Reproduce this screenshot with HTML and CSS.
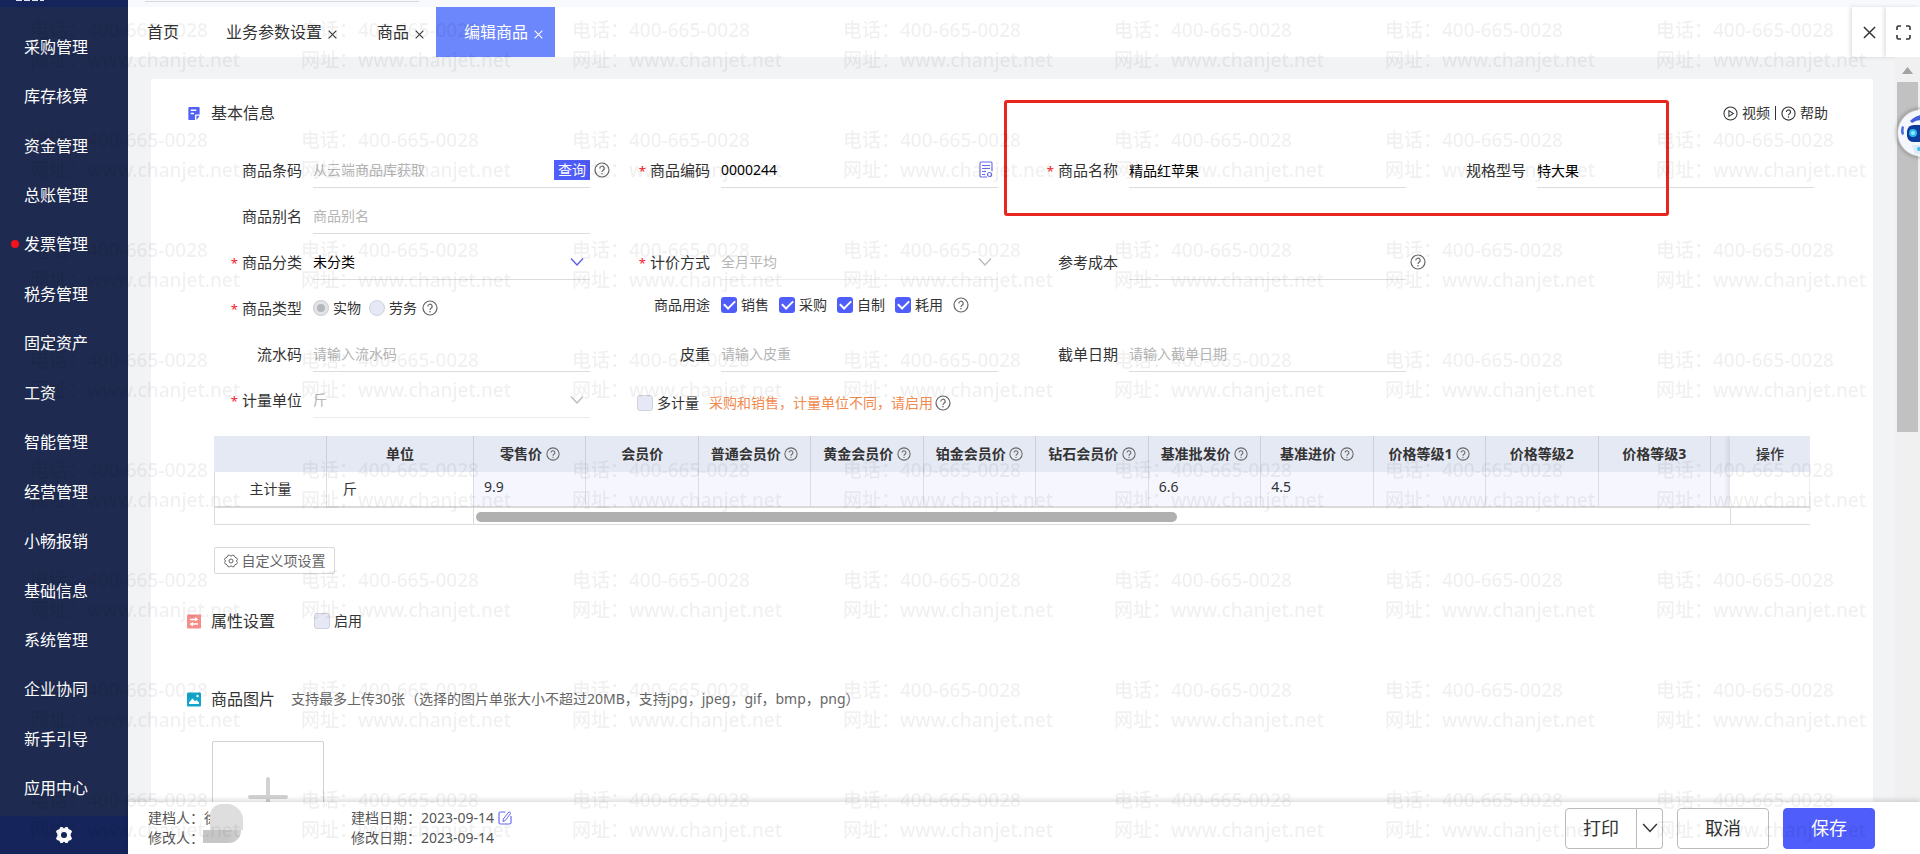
FILE: index.html
```html
<!DOCTYPE html>
<html lang="zh-CN">
<head>
    <meta charset="UTF-8">
    <title>编辑商品</title>
    <link rel="stylesheet" href="styles.css">
</head>
<body>

<svg class="sprite" aria-hidden="true">
    <symbol id="i-help" viewBox="0 0 16 16">
        <circle cx="8" cy="8" r="7" fill="none" stroke="currentColor" stroke-width="1.2"/>
        <path d="M5.8 6.4a2.2 2.2 0 1 1 3.3 1.9c-.8.5-1.1.8-1.1 1.6" fill="none" stroke="currentColor" stroke-width="1.2"/>
        <circle cx="8" cy="11.8" r=".8" fill="currentColor"/>
    </symbol>
    <symbol id="i-down" viewBox="0 0 14 14">
        <path d="M1 3.5l6 6.5 6-6.5" fill="none" stroke="currentColor" stroke-width="1.3"/>
    </symbol>
    <symbol id="i-close" viewBox="0 0 14 14">
        <path d="M1 1l12 12M13 1L1 13" fill="none" stroke="currentColor" stroke-width="1.6"/>
    </symbol>
</svg>

<nav class="sidebar">
    <div class="sidebar-top"></div>
    <ul class="menu">
        <li><a href="#">采购管理</a></li>
        <li><a href="#">库存核算</a></li>
        <li><a href="#">资金管理</a></li>
        <li><a href="#">总账管理</a></li>
        <li class="has-dot"><a href="#">发票管理</a></li>
        <li><a href="#">税务管理</a></li>
        <li><a href="#">固定资产</a></li>
        <li><a href="#">工资</a></li>
        <li><a href="#">智能管理</a></li>
        <li><a href="#">经营管理</a></li>
        <li><a href="#">小畅报销</a></li>
        <li><a href="#">基础信息</a></li>
        <li><a href="#">系统管理</a></li>
        <li><a href="#">企业协同</a></li>
        <li><a href="#">新手引导</a></li>
        <li><a href="#">应用中心</a></li>
    </ul>
    <button class="sidebar-gear" aria-label="设置">
        <svg width="18" height="18" viewBox="0 0 18 18"><path d="M5.5 1h2l1.5 1.6L10.500 1h2l1.200 2.300 2.300.7 1 1.800-1.300 2.200v2l1.300 2.200-1 1.800-2.300.7-1.200 2.300h-2L9 15.400 7.500 17h-2l-1.200-2.300L2 14l-1-1.800L2.300 10V8L1 5.800 2 4l2.300-.7z" fill="#fff"/><circle cx="9" cy="9" r="3" fill="#15245a"/></svg>
    </button>
</nav>

<div class="main">
    <div class="topbar"><span class="topbar-line"></span></div>

    <div class="tabs">
        <a class="tab tab-home" href="#">首页</a>
        <a class="tab" href="#">业务参数设置<svg class="tab-x"><use href="#i-close"/></svg></a>
        <a class="tab" href="#">商品<svg class="tab-x"><use href="#i-close"/></svg></a>
        <a class="tab active" href="#">编辑商品<svg class="tab-x"><use href="#i-close"/></svg></a>
        <div class="tab-tools">
            <button class="tool" aria-label="关闭"><svg width="13" height="13"><use href="#i-close"/></svg></button>
            <button class="tool" aria-label="全屏"><svg width="15" height="15" viewBox="0 0 15 15"><path d="M1 5V2.500Q1 1 2.500 1H5M10 1h2.500Q14 1 14 2.500V5M14 10v2.500q0 1.500-1.500 1.500H10M5 14H2.500Q1 14 1 12.500V10" fill="none" stroke="#333" stroke-width="1.6"/></svg></button>
        </div>
    </div>

    <div class="content">
        <div class="scroll-area">
            <form class="panel">
                <div class="section-head">
                    <svg class="section-icon" viewBox="0 0 14 16"><path d="M2 1h10q1 0 1 1v7H9q-1 0-1 1v5H2q-1 0-1-1V2q0-1 1-1z" fill="#5260f5"/><path d="M9.500 10.500H13L9.500 15z" fill="#5260f5"/><path d="M3.500 4.500h6M3.500 8h3.500" stroke="#fff" stroke-width="1.5"/></svg>
                    <h2>基本信息</h2>
                    <div class="help-links">
                        <a href="#"><svg width="15" height="15" viewBox="0 0 16 16"><circle cx="8" cy="8" r="7" fill="none" stroke="currentColor" stroke-width="1.1"/><path d="M6.300 5v6l4.700-3z" fill="none" stroke="currentColor" stroke-width="1.1"/></svg>视频</a>
                        <span class="split"></span>
                        <a href="#"><svg width="15" height="15"><use href="#i-help"/></svg>帮助</a>
                    </div>
                </div>

                <div class="fields">
                    <div class="field">
                        <label for="barcode">商品条码</label>
                        <div class="box">
                            <input id="barcode" type="text" placeholder="从云端商品库获取">
                            <button type="button" class="query">查询</button>
                            <svg class="help after"><use href="#i-help"/></svg>
                        </div>
                    </div>
                    <div class="field">
                        <label for="code" class="required">商品编码</label>
                        <div class="box">
                            <input id="code" type="text" value="0000244">
                            <svg class="code-icon" viewBox="0 0 14 17"><path d="M8 16H2q-1 0-1-1V2q0-1 1-1h10q1 0 1 1v8" fill="none" stroke="#6a6cf0" stroke-width="1.1"/><path d="M3 4.500h8M3 7.500h8M3 10.500h4M3 13.500h3" stroke="#6a6cf0"/><circle cx="10.500" cy="13.500" r="2" fill="none" stroke="#6a6cf0" stroke-width="1.200"/></svg>
                        </div>
                    </div>
                    <div class="field">
                        <label for="name" class="required">商品名称</label>
                        <div class="box"><input id="name" type="text" value="精品红苹果"></div>
                    </div>
                    <div class="field">
                        <label for="spec">规格型号</label>
                        <div class="box"><input id="spec" type="text" value="特大果"></div>
                    </div>

                    <div class="field first">
                        <label for="alias">商品别名</label>
                        <div class="box"><input id="alias" type="text" placeholder="商品别名"></div>
                    </div>

                    <div class="field first">
                        <label for="category" class="required">商品分类</label>
                        <div class="box">
                            <select id="category"><option>未分类</option></select>
                            <svg class="down"><use href="#i-down"/></svg>
                        </div>
                    </div>
                    <div class="field">
                        <label for="pricing" class="required">计价方式</label>
                        <div class="box disabled">
                            <select id="pricing" disabled><option>全月平均</option></select>
                            <svg class="down"><use href="#i-down"/></svg>
                        </div>
                    </div>
                    <div class="field">
                        <label for="cost">参考成本</label>
                        <div class="box">
                            <input id="cost" type="text">
                            <svg class="help after"><use href="#i-help"/></svg>
                        </div>
                    </div>

                    <div class="field first">
                        <span class="label required">商品类型</span>
                        <div class="options">
                            <label class="radio"><input type="radio" name="kind" checked disabled>实物</label>
                            <label class="radio"><input type="radio" name="kind" disabled>劳务</label>
                            <svg class="help"><use href="#i-help"/></svg>
                        </div>
                    </div>
                    <div class="field usage">
                        <span class="label">商品用途</span>
                        <div class="options">
                            <label class="check"><input type="checkbox" checked>销售</label>
                            <label class="check"><input type="checkbox" checked>采购</label>
                            <label class="check"><input type="checkbox" checked>自制</label>
                            <label class="check"><input type="checkbox" checked>耗用</label>
                            <svg class="help"><use href="#i-help"/></svg>
                        </div>
                    </div>

                    <div class="field first">
                        <label for="serial">流水码</label>
                        <div class="box"><input id="serial" type="text" placeholder="请输入流水码"></div>
                    </div>
                    <div class="field">
                        <label for="tare">皮重</label>
                        <div class="box"><input id="tare" type="text" placeholder="请输入皮重"></div>
                    </div>
                    <div class="field">
                        <label for="cutoff">截单日期</label>
                        <div class="box"><input id="cutoff" type="text" placeholder="请输入截单日期"></div>
                    </div>

                    <div class="field first">
                        <label for="unit" class="required">计量单位</label>
                        <div class="box disabled">
                            <select id="unit" disabled><option>斤</option></select>
                            <svg class="down"><use href="#i-down"/></svg>
                        </div>
                    </div>
                    <div class="field multi">
                        <label class="check"><input type="checkbox" disabled>多计量</label>
                        <span class="tip">采购和销售，计量单位不同，请启用</span>
                        <svg class="help"><use href="#i-help"/></svg>
                    </div>
                </div>

                <div class="price">
                    <table>
                        <colgroup>
                            <col class="c-kind"><col class="c-unit">
                            <col span="11">
                            <col class="c-more"><col class="c-action">
                        </colgroup>
                        <thead>
                            <tr>
                                <th></th>
                                <th>单位</th>
                                <th>零售价 <svg class="help"><use href="#i-help"/></svg></th>
                                <th>会员价</th>
                                <th>普通会员价 <svg class="help"><use href="#i-help"/></svg></th>
                                <th>黄金会员价 <svg class="help"><use href="#i-help"/></svg></th>
                                <th>铂金会员价 <svg class="help"><use href="#i-help"/></svg></th>
                                <th>钻石会员价 <svg class="help"><use href="#i-help"/></svg></th>
                                <th>基准批发价 <svg class="help"><use href="#i-help"/></svg></th>
                                <th>基准进价 <svg class="help"><use href="#i-help"/></svg></th>
                                <th>价格等级1 <svg class="help"><use href="#i-help"/></svg></th>
                                <th>价格等级2</th>
                                <th>价格等级3</th>
                                <th></th>
                                <th class="action">操作</th>
                            </tr>
                        </thead>
                        <tbody>
                            <tr>
                                <td class="kind">主计量</td>
                                <td class="unit">斤</td>
                                <td>9.9</td>
                                <td></td>
                                <td></td>
                                <td></td>
                                <td></td>
                                <td></td>
                                <td>6.6</td>
                                <td>4.5</td>
                                <td></td>
                                <td></td>
                                <td></td>
                                <td></td>
                                <td class="action"></td>
                            </tr>
                        </tbody>
                    </table>
                    <div class="hscroll">
                        <div class="hscroll-left"></div>
                        <div class="hscroll-track"><div class="hscroll-thumb"></div></div>
                        <div class="hscroll-right"></div>
                    </div>
                </div>

                <button type="button" class="custom">
                    <svg width="14" height="14" viewBox="0 0 14 14"><path d="M4 1.300h1.600L7 2.200l1.400-.9H10l1 1.900 1.800.9.700 1.500L12.400 7l1.100 1.400-.7 1.500-1.800.9-1 1.900H8.400L7 11.800l-1.400.9H4l-1-1.900-1.800-.9-.7-1.500L1.600 7 .5 5.600l.7-1.500L3 3.200z" fill="none" stroke="#666"/><circle cx="7" cy="7" r="2" fill="none" stroke="#666"/></svg>自定义项设置
                </button>

                <div class="section-head attrs">
                    <svg class="section-icon" viewBox="0 0 14 14"><rect width="14" height="14" rx="1" fill="#f58d88"/><path d="M3 5h7M4 9.500h7" stroke="#fff" stroke-width="1.300"/><path d="M8 2.500L11.500 5 8 6.500zM6 7.500L2.500 9.500 6 12z" fill="#fff"/></svg>
                    <h2>属性设置</h2>
                    <label class="check"><input type="checkbox" disabled>启用</label>
                </div>

                <div class="section-head photos">
                    <svg class="section-icon" viewBox="0 0 14 14"><rect width="14" height="14" rx="1" fill="#12a5cc"/><path d="M2 11.500V10l3.500-4L8 8.800l1.500-1.300L12 10v1.500z" fill="#fff"/><circle cx="10.500" cy="3.500" r="1.200" fill="#fff"/></svg>
                    <h2>商品图片</h2>
                    <span class="note">支持最多上传30张（选择的图片单张大小不超过20MB，支持jpg，jpeg，gif，bmp，png）</span>
                </div>
                <button type="button" class="upload" aria-label="上传图片">
                    <svg width="40" height="40" viewBox="0 0 40 40"><path d="M20 2v36M2 20h36" stroke="#d2d2d2" stroke-width="4" stroke-linecap="round"/></svg>
                </button>

                <div class="highlight"></div>
            </form>
        </div>

        <div class="scrollbar">
            <svg width="11" height="7" viewBox="0 0 11 7"><path d="M0 7l5.500-7L11 7z" fill="#a3a3a3"/></svg>
            <div class="scroll-thumb"></div>
        </div>
    </div>

    <footer class="footer">
        <div class="meta people">
            <div>建档人：徐<span class="mask"></span></div>
            <div>修改人：</div>
        </div>
        <div class="meta">
            <div>建档日期：2023-09-14 <svg class="edit" viewBox="0 0 14 14"><path d="M7.500 1H2.500Q1 1 1 2.500v9Q1 13 2.500 13h9q1.500 0 1.500-1.500V5" fill="none" stroke="#6a6cf0" stroke-width="1.200"/><path d="M11 .8l1.800 1.400-5.500 7.300-2.300 1 .3-2.500z" fill="none" stroke="#6a6cf0"/></svg></div>
            <div>修改日期：2023-09-14</div>
        </div>
        <div class="actions">
            <div class="print">
                <button class="btn">打印</button>
                <button class="btn more" aria-label="更多"><svg width="16" height="16"><use href="#i-down"/></svg></button>
            </div>
            <button class="btn cancel">取消</button>
            <button class="btn save">保存</button>
        </div>
    </footer>
</div>

<button class="robot" aria-label="客服">
    <svg width="48" height="48" viewBox="0 0 48 48"><circle cx="24" cy="24" r="23" fill="#f4f7fd"/><path d="M13 12Q18 7 24 6v5q-5 0-9 3z" fill="#3f5fd6"/><path d="M5 17q-2 5 0 9l2-1q-1-4 0-7z" fill="#4a6be0"/><path d="M10 22q1-6 7-6h14q6 0 7 6v4q-1 7-7 7H17q-6 0-7-6z" fill="#0d3b9c"/><circle cx="16" cy="24" r="4" fill="#2fb8f0"/><circle cx="16" cy="24" r="2" fill="#8feaff"/><circle cx="32" cy="24" r="4" fill="#2fb8f0"/><path d="M15 36h18l-3 9H18z" fill="#dde8f8"/><circle cx="22" cy="40" r="2" fill="#35c5f2"/></svg>
</button>

<div class="watermark" id="watermark" aria-hidden="true"></div>

<script>
    const TILE_W = 271;
    const TILE_H = 110;
    const mark = document.getElementById("watermark");
    const cols = Math.floor(window.innerWidth / TILE_W);
    const rows = Math.ceil(window.innerHeight / TILE_H);
    for (let i = 0; i < cols * rows; i++) {
        const tile = document.createElement("div");
        tile.innerHTML = "电话：400-665-0028<br>网址：www.chanjet.net";
        mark.appendChild(tile);
    }
</script>

</body>
</html>
```
FILE: styles.css
```css
* {
    box-sizing: border-box;
}

body {
    margin: 0;
    height: 100vh;
    display: flex;
    overflow: hidden;
    font-family: "Noto Sans", "Noto Sans CJK SC", sans-serif;
    font-size: 14px;
    line-height: 20px;
    color: #333;
    background: #f2f3f5;
}

button, input, select {
    font: inherit;
    color: inherit;
    margin: 0;
}

button {
    cursor: pointer;
    padding: 0;
    border: 0;
    background: none;
}

a {
    color: inherit;
    text-decoration: none;
}

.sprite {
    display: none;
}

/* sidebar */
.sidebar {
    width: 128px;
    flex: none;
    display: flex;
    flex-direction: column;
    background: #1e2a4f;
    color: #fff;
    font-size: 16px;
}

.sidebar-top {
    height: 7px;
    margin-bottom: 15px;
    background: #15245a;
}

.sidebar-top::before {
    content: "";
    display: block;
    width: 28px;
    height: 1px;
    margin-left: 16px;
    background: repeating-linear-gradient(90deg, #dfe3ee 0 6px, #15245a 6px 8px);
}

.menu {
    flex: 1;
    display: flex;
    flex-direction: column;
    list-style: none;
    margin: 0;
    padding: 0 0 3px;
}

.menu li {
    flex: 1;
    display: flex;
    align-items: center;
    position: relative;
    padding-left: 24px;
}

.has-dot::before {
    content: "";
    position: absolute;
    left: 11px;
    width: 8px;
    height: 8px;
    border-radius: 50%;
    background: #f5121c;
}

.sidebar-gear {
    height: 38px;
    display: flex;
    align-items: center;
    justify-content: center;
    background: #15245a;
}

/* tabs */
.main {
    flex: 1;
    min-width: 0;
    display: flex;
    flex-direction: column;
}

.topbar {
    height: 7px;
    padding-left: 17px;
    background: #f7f9fd;
}

.topbar-line {
    display: block;
    width: 274px;
    height: 2px;
    border-bottom: 1px solid #d8d8d8;
}

.tabs {
    height: 50px;
    display: flex;
    background: #fff;
    font-size: 16px;
}

.tab {
    display: flex;
    align-items: center;
    gap: 6px;
    padding: 0 12px 0 28px;
}

.tab-home {
    padding: 0 19px;
}

.tab-x {
    width: 9px;
    height: 9px;
    margin-top: 4px;
}

.tab.active {
    background: #6c86fb;
    color: #fff;
}

.tab-tools {
    margin-left: auto;
    display: flex;
}

.tool {
    width: 34px;
    display: flex;
    align-items: center;
    justify-content: center;
    background: #fff;
    box-shadow: -2px 0 4px rgba(0, 0, 0, 0.12);
}

/* content */
.content {
    flex: 1;
    min-height: 0;
    display: flex;
}

.scroll-area {
    flex: 1;
    min-width: 0;
    overflow: hidden;
    padding: 22px 22px 0 23px;
}

.panel {
    position: relative;
    min-height: 100%;
    padding-top: 22px;
    background: #fff;
}

.section-head {
    display: flex;
    align-items: center;
    height: 24px;
    padding: 0 45px 0 36px;
}

.section-icon {
    width: 14px;
    height: 15px;
    margin-right: 10px;
}

.section-head h2 {
    margin: 0;
    font-size: 16px;
    font-weight: normal;
}

.help-links {
    margin-left: auto;
    display: flex;
    align-items: center;
    gap: 5px;
}

.help-links a {
    display: flex;
    align-items: center;
    gap: 4px;
}

.split {
    width: 1px;
    height: 14px;
    background: #333;
}

.fields {
    display: grid;
    grid-template-columns: repeat(4, 1fr);
    grid-auto-rows: 46px;
    padding: 17px 59px 0 31px;
}

.field {
    display: flex;
    align-items: center;
    padding-top: 10px;
}

.first {
    grid-column: 1;
}

.field > label:first-child,
.field .label {
    width: 120px;
    margin-right: 11px;
    flex: none;
    text-align: right;
    font-size: 15px;
}

.required::before {
    content: "*";
    margin-right: 4px;
    font-size: 13px;
    color: #f5222d;
}

.box {
    position: relative;
    flex: 1;
    min-width: 0;
    height: 36px;
    display: flex;
    align-items: center;
    border-bottom: 1px solid #dcdcdc;
    color: #000;
}

.box input,
.box select {
    flex: 1;
    min-width: 0;
    height: 30px;
    padding: 0;
    border: 0;
    outline: 0;
    background: none;
    appearance: none;
    opacity: 1;
}

.box input::placeholder {
    color: #b5b5b5;
}

.box.disabled {
    color: #b5b5b5;
    border-color: #ebebeb;
}

.down {
    width: 14px;
    height: 14px;
    margin-right: 6px;
    color: #5b5ce6;
}

.disabled .down {
    color: #bbb;
}

.query {
    width: 36px;
    height: 20px;
    background: #4f5dfb;
    color: #fff;
}

.code-icon {
    width: 14px;
    height: 17px;
    margin-right: 5px;
}

.help {
    width: 16px;
    height: 16px;
    flex: none;
    color: #666;
}

.help.after {
    position: absolute;
    left: 100%;
    margin-left: 4px;
}

.options {
    display: flex;
    align-items: center;
    gap: 8px;
}

.radio,
.check {
    display: flex;
    align-items: center;
    gap: 4px;
}

.radio input,
.check input {
    appearance: none;
    width: 16px;
    height: 16px;
    border: 1px solid #d0d3dc;
    background: #e6e9f5;
}

.radio input {
    border-radius: 50%;
}

.radio input:checked {
    border: 4px solid #e3e3e6;
    background: #b4b7bc;
    outline: 1px solid #d0d0d4;
    outline-offset: -1px;
}

.radio + .help {
    margin-left: -3px;
}

.check input {
    border-radius: 3px;
    display: grid;
    place-items: center;
}

.check input:checked {
    border: 0;
    background: #4f5dfb;
}

.check input:checked::before {
    content: "";
    width: 9px;
    height: 5px;
    margin-bottom: 3px;
    border-left: 2px solid #fff;
    border-bottom: 2px solid #fff;
    transform: rotate(-45deg);
}

.usage {
    padding-top: 3px;
}

.field.usage .label {
    font-size: 14px;
}

.usage .options {
    gap: 10px;
}

.field.multi {
    padding: 16px 0 0 47px;
    gap: 10px;
    white-space: nowrap;
}

.field.multi .check {
    width: auto;
    margin: 0;
    font-size: 14px;
}

.multi .tip {
    color: #f08a4f;
}

.multi .help {
    margin-left: -8px;
}

/* price table */
.price {
    margin: 18px 63px 0;
}

table {
    width: 100%;
    table-layout: fixed;
    border-collapse: separate;
    border-spacing: 0;
}

.c-kind {
    width: 113px;
}

.c-unit {
    width: 147px;
}

.c-more {
    width: 19px;
}

.c-action {
    width: 80px;
}

th, td {
    height: 36px;
    padding: 0;
    white-space: nowrap;
}

th {
    background: #e5e9f3;
    border-right: 1px solid #cdd0d8;
    font-weight: bold;
}

th .help {
    width: 14px;
    height: 14px;
    vertical-align: -2px;
}

td {
    padding: 0 0 4px 10px;
    background: #f6f7fe;
    border-right: 1px solid #dcdde4;
    border-bottom: 2px solid #dadada;
}

td.kind,
td.unit {
    padding: 0 0 0 16px;
    background: #fff;
}

td.kind {
    padding: 0;
    text-align: center;
    border-left: 1px solid #dcdcdc;
}

th:nth-last-child(2),
td:nth-last-child(2) {
    border-right: 0;
}

.action {
    border-right: 0;
    box-shadow: -3px 0 4px rgba(0, 0, 0, 0.08);
    clip-path: inset(0 0 0 -8px);
}

th.action {
    font-weight: 500;
}

td.action {
    background: #fff;
    border-right: 1px solid #eee;
}

.hscroll {
    display: flex;
    height: 17px;
    border: 1px solid #dcdcdc;
    border-width: 0 0 1px 1px;
}

.hscroll-left {
    width: 259px;
    border-right: 1px solid #dcdcdc;
}

.hscroll-track {
    flex: 1;
    padding: 4px 2px;
}

.hscroll-thumb {
    width: 56%;
    height: 10px;
    border-radius: 5px;
    background: #b0b0b0;
}

.hscroll-right {
    width: 80px;
    border-left: 1px solid #dcdcdc;
}

.custom {
    display: flex;
    align-items: center;
    justify-content: center;
    gap: 4px;
    width: 121px;
    height: 27px;
    margin: 22px 0 0 63px;
    border: 1px solid #d9d9d9;
    border-radius: 2px;
    color: #666;
}

.attrs {
    margin-top: 35px;
}

.attrs .check {
    margin-left: 39px;
}

.photos {
    margin-top: 54px;
}

.note {
    margin-left: 16px;
    color: #666;
}

.upload {
    display: flex;
    align-items: center;
    justify-content: center;
    width: 112px;
    height: 112px;
    margin: 30px 0 0 61px;
    border: 1px solid #d2d2d2;
    border-radius: 2px;
}

/* frame over the name and spec fields */
.highlight {
    position: absolute;
    left: 853px;
    top: 21px;
    width: 665px;
    height: 116px;
    border: 3px solid #e8251f;
    border-radius: 3px;
    pointer-events: none;
}

.scrollbar {
    width: 25px;
    display: flex;
    flex-direction: column;
    align-items: center;
    gap: 8px;
    padding-top: 10px;
    background: #f0f0f0;
}

.scroll-thumb {
    width: 21px;
    height: 350px;
    background: #c1c1c1;
}

/* footer */
.footer {
    position: relative;
    display: flex;
    align-items: center;
    gap: 106px;
    height: 52px;
    padding: 0 45px 0 20px;
    background: #fff;
    box-shadow: 0 -2px 5px rgba(0, 0, 0, 0.15);
    color: #555;
}

.people {
    width: 97px;
    position: relative;
}

.mask {
    position: absolute;
    left: 62px;
    top: -4px;
    width: 33px;
    height: 26px;
    border-radius: 12px 16px 0 0;
    background: #dedede;
}

.mask::after {
    content: "";
    position: absolute;
    left: -7px;
    top: 26px;
    width: 38px;
    height: 13px;
    border-radius: 0 0 12px 0;
    background: linear-gradient(90deg, #c6c6c6 60%, #d2d2d2);
}

.edit {
    width: 14px;
    height: 14px;
    vertical-align: -2px;
}

.actions {
    margin-left: auto;
    display: flex;
    gap: 14px;
}

.btn {
    width: 92px;
    height: 41px;
    border: 1px solid #bbb;
    border-radius: 4px;
    background: #fff;
    color: #333;
    font-size: 18px;
}

.print {
    display: flex;
}

.print .btn {
    width: 72px;
    border-radius: 4px 0 0 4px;
}

.print .more {
    display: flex;
    align-items: center;
    justify-content: center;
    width: 26px;
    border-left: 0;
    border-radius: 0 4px 4px 0;
}

.save {
    border-color: #4f5dfb;
    background: #4f5dfb;
    color: #fff;
}

.robot {
    position: fixed;
    right: -25px;
    top: 109px;
    height: 48px;
    border-radius: 50%;
    box-shadow: 0 0 4px rgba(0, 0, 0, 0.4);
}

.watermark {
    position: fixed;
    top: 15px;
    right: -30px;
    bottom: 0;
    left: 30px;
    overflow: hidden;
    display: grid;
    grid-template-columns: repeat(auto-fill, 271px);
    grid-auto-rows: 110px;
    pointer-events: none;
    color: rgba(0, 0, 0, 0.06);
    font-size: 19px;
    font-weight: 500;
    line-height: 30px;
}
```
